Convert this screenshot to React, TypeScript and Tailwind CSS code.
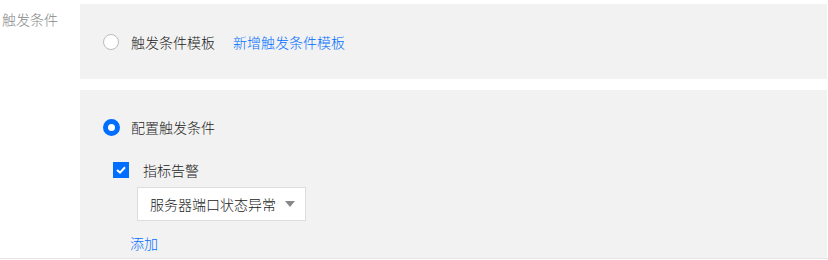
import React from "react";

export default function App() {
  const font = { fontFamily: '"Microsoft YaHei", "Noto Sans CJK SC", "Liberation Sans", sans-serif' };
  return (
    <div className="w-[828px] h-[260px] bg-white overflow-hidden font-light" style={font}>
      <div className="flex h-[259px] border-b border-[#e5e5e5]">
        <div className="w-[80px] shrink-0 pl-[2px] pt-[9px] text-[14px] leading-[20px] text-[#888]">触发条件</div>
        <div className="flex-1 mr-[1px] flex flex-col">
          <div className="mt-[4px] h-[75px] bg-[#f2f2f2] flex items-center pl-[23px]">
            <span className="w-[16px] h-[16px] rounded-full border border-[#bbb] bg-white shrink-0" />
            <span className="ml-[12px] text-[14px] leading-[20px] text-[#222]">触发条件模板</span>
            <span className="ml-[18px] text-[14px] leading-[20px] text-[#006eff]">新增触发条件模板</span>
          </div>
          <div className="mt-[11px] flex-1 bg-[#f2f2f2] pl-[23px] pt-[29px]">
            <div className="flex items-center h-[16px]">
              <span className="w-[17px] h-[17px] rounded-full border-[5px] border-[#006eff] bg-white shrink-0" />
              <span className="ml-[11px] text-[14px] leading-[20px] text-[#222]">配置触发条件</span>
            </div>
            <div className="ml-[10px] mt-[27px] flex items-center h-[16px]">
              <span className="w-[16px] h-[16px] bg-[#006eff] flex items-center justify-center shrink-0">
                <svg width="10" height="8" viewBox="0 0 10 8">
                  <path d="M1 4 L4 6.6 L9 1.3" fill="none" stroke="#fff" strokeWidth="2" />
                </svg>
              </span>
              <span className="ml-[14px] text-[14px] leading-[20px] text-[#222]">指标告警</span>
            </div>
            <div className="ml-[34px] mt-[9px] w-[169px] h-[34px] bg-white border border-[#ddd] flex items-center justify-between pl-[12px] pr-[10px]">
              <span className="text-[14px] leading-[20px] text-[#222]">服务器端口状态异常</span>
              <svg width="10" height="6" viewBox="0 0 10 6">
                <path d="M0 0 L10 0 L5 6 Z" fill="#888" />
              </svg>
            </div>
            <div className="ml-[27px] mt-[12px] text-[14px] leading-[20px] text-[#006eff]">添加</div>
          </div>
        </div>
      </div>
    </div>
  );
}
